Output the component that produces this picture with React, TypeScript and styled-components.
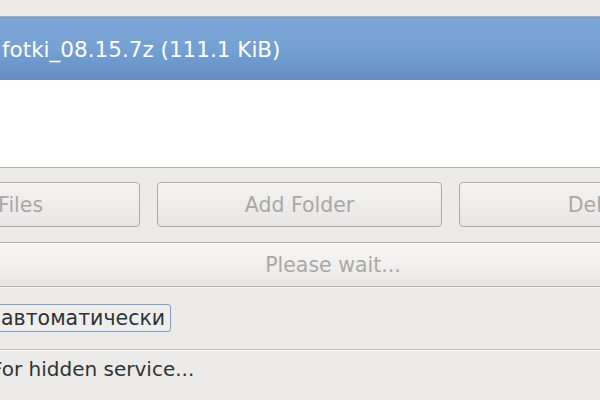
import styled, { createGlobalStyle } from "styled-components";

const GlobalStyle = createGlobalStyle`
  html, body {
    margin: 0;
    padding: 0;
    background: #edebe9;
    overflow: hidden;
  }
`;

// the screenshot is a crop of a wider dialog, so the canvas starts left of the view
const Viewport = styled.div`
  width: 600px;
  height: 400px;
  overflow: hidden;
  background: #edebe9;
  font-family: "DejaVu Sans", "Liberation Sans", sans-serif;
`;

const Canvas = styled.div`
  display: flex;
  flex-direction: column;
  width: 906px;
  margin-left: -153px;
  padding-top: 16px;
`;

const FileList = styled.div`
  display: flex;
  flex-direction: column;
  height: 150px;
  background: #ffffff;
  border-top: 1px solid #b0aca8;
  border-bottom: 1px solid #b0aca8;
`;

const FileRow = styled.div<{ $selected?: boolean }>`
  display: flex;
  align-items: center;
  height: 63px;
  padding-left: 155px;
  padding-top: 1px;
  box-sizing: border-box;
  font-size: 21.5px;
  color: ${(p) => (p.$selected ? "#ffffff" : "#2e3436")};
  background: ${(p) =>
    p.$selected
      ? "linear-gradient(to bottom, #739fd2 0, #7da5d6 2px, #75a0d4 50%, #6690c3 100%)"
      : "transparent"};
`;

const ButtonRow = styled.div`
  display: flex;
  gap: 17px;
  padding-left: 8px;
  margin-top: 14px;
`;

const Button = styled.button`
  width: 285px;
  height: 45px;
  flex-shrink: 0;
  border: 1px solid #aeaaa6;
  border-radius: 4px;
  background: linear-gradient(to bottom, #f4f3f2, #e8e6e4);
  box-shadow: inset 0 1px 0 #fbfbfa;
  color: #aaa8a5;
  font-family: inherit;
  font-size: 20.5px;
  padding: 0;
`;

const Progress = styled.div`
  display: flex;
  align-items: center;
  justify-content: center;
  height: 43px;
  margin-top: 15px;
  border-top: 1px solid #b4b1ad;
  border-bottom: 1px solid #b4b1ad;
  background: linear-gradient(to bottom, #f7f6f5, #f1f0ef 50%, #e7e6e4);
  box-shadow: inset 0 1px 0 #fdfdfc, 0 1px 0 #f8f7f6;
  color: #aaa8a5;
  font-size: 20.5px;
  padding-left: 66px;
`;

const ComboRow = styled.div`
  display: flex;
  margin-top: 17px;
  padding-left: 133px;
`;

const Combo = styled.div`
  display: flex;
  align-items: center;
  height: 28px;
  padding: 0 5px 0 20px;
  box-sizing: border-box;
  border: 1px solid #7f9dc6;
  border-radius: 3px;
  background: #efeeec;
  color: #2e3436;
  font-size: 20.5px;
`;

const Divider = styled.div`
  height: 1px;
  margin-top: 17px;
  background: #c4c1bd;
  box-shadow: 0 1px 0 #fbfaf9;
`;

const Hint = styled.div`
  margin-top: 7px;
  padding-left: 144px;
  color: #2e3436;
  font-size: 20px;
`;

export default function App() {
  return (
    <>
      <GlobalStyle />
      <Viewport>
        <Canvas>
          <FileList>
            <FileRow $selected>fotki_08.15.7z (111.1 KiB)</FileRow>
          </FileList>
          <ButtonRow>
            <Button disabled>Add Files</Button>
            <Button disabled>Add Folder</Button>
            <Button disabled>Delete</Button>
          </ButtonRow>
          <Progress>Please wait...</Progress>
          <ComboRow>
            <Combo>автоматически</Combo>
          </ComboRow>
          <Divider />
          <Hint>For hidden service...</Hint>
        </Canvas>
      </Viewport>
    </>
  );
}
